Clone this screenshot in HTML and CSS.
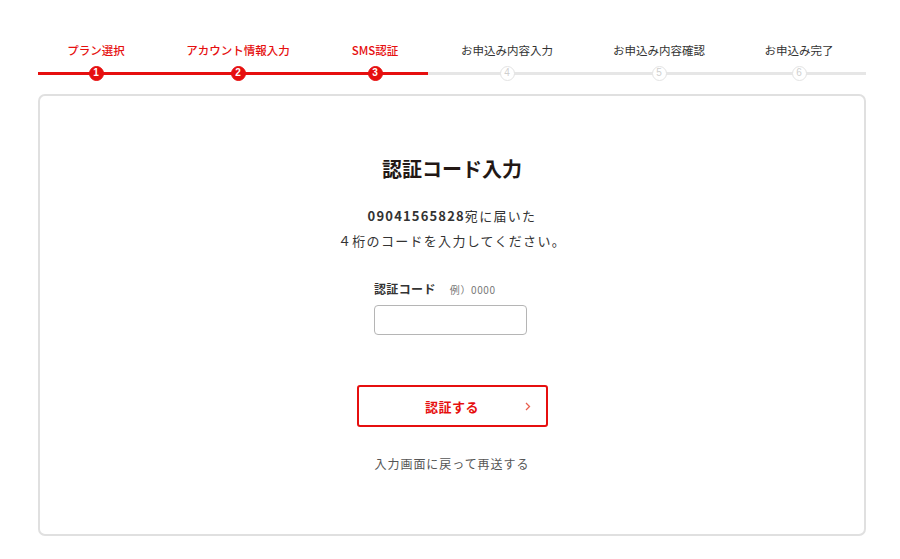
FILE: index.html
```html
<!DOCTYPE html>
<html lang="ja">
<head>
<meta charset="utf-8">
<title>認証コード入力</title>
<link rel="stylesheet" href="styles.css">
</head>
<body>
<div class="page">
  <ol class="steps">
    <li class="step done"><span class="step-label">プラン選択</span><span class="track"><span class="num">1</span></span></li>
    <li class="step done"><span class="step-label">アカウント情報入力</span><span class="track"><span class="num">2</span></span></li>
    <li class="step done"><span class="step-label">SMS認証</span><span class="track"><span class="num">3</span></span></li>
    <li class="step"><span class="step-label">お申込み内容入力</span><span class="track"><span class="num">4</span></span></li>
    <li class="step"><span class="step-label">お申込み内容確認</span><span class="track"><span class="num">5</span></span></li>
    <li class="step"><span class="step-label">お申込み完了</span><span class="track"><span class="num">6</span></span></li>
  </ol>

  <section class="card">
    <h1 class="title">認証コード入力</h1>
    <p class="lead"><b>09041565828</b>宛に届いた<br>４桁のコードを入力してください。</p>
    <div class="field">
      <label class="field-label" for="code">認証コード<span class="hint">例）0000</span></label>
      <input class="field-input" id="code" type="text">
    </div>
    <button class="submit" type="button"><span>認証する</span><svg class="chev" width="6" height="9" viewBox="0 0 6 9"><path d="M1 1l3.5 3.5L1 8" fill="none" stroke="currentColor" stroke-width="1.3"/></svg></button>
    <a class="back" href="#">入力画面に戻って再送する</a>
  </section>
</div>
</body>
</html>
```

FILE: styles.css
```css
* { box-sizing: border-box; }
html, body { margin: 0; padding: 0; background: #fff; }
body {
  font-family: "Noto Sans CJK JP", "Noto Sans", sans-serif;
  color: #222;
}
.page {
  width: 828px;
  margin: 0 0 0 38px;
  padding-top: 42px;
}
.steps {
  list-style: none;
  margin: 0;
  padding: 0;
  display: grid;
  grid-template-columns: 116px 168px 106px 158px 146px 134px;
}
.step {
  display: flex;
  flex-direction: column;
  align-items: center;
}
.step-label {
  font-size: 11.5px;
  line-height: 16px;
  font-weight: 400;
  color: #333;
  white-space: nowrap;
}
.step.done .step-label { color: #e60f0f; font-weight: 500; }
.track {
  margin-top: 8px;
  width: 100%;
  height: 15px;
  display: flex;
  justify-content: center;
  align-items: center;
  background: linear-gradient(#e6e6e6, #e6e6e6) center / 100% 3px no-repeat;
}
.step.done .track {
  background: linear-gradient(#e60f0f, #e60f0f) center / 100% 3px no-repeat;
}
.num {
  width: 15px;
  height: 15px;
  border-radius: 50%;
  border: 1.5px solid #e3e3e3;
  background: #fff;
  color: #cfcfcf;
  font-family: "Liberation Sans", Arial, sans-serif;
  font-size: 10px;
  line-height: 12px;
  text-align: center;
}
.step.done .num {
  background: #e60f0f;
  border-color: #e60f0f;
  color: #fff;
  font-weight: 700;
}
.card {
  margin-top: 13px;
  height: 442px;
  border: 2px solid #e0e0e0;
  border-radius: 7px;
  padding-top: 59px;
  display: flex;
  flex-direction: column;
  align-items: center;
}
.title {
  margin: 0;
  font-size: 20px;
  line-height: 28px;
  font-weight: 700;
  color: #231815;
}
.lead {
  margin: 20px 0 0;
  font-size: 13px;
  line-height: 25px;
  text-align: center;
  color: #333;
  letter-spacing: 0.1em;
}
.lead b { font-weight: 700; letter-spacing: 0.09em; }
.field {
  margin-top: 27px;
  width: 153px;
  display: flex;
  flex-direction: column;
  margin-right: 3px;
}
.field-label {
  font-size: 12px;
  line-height: 18px;
  font-weight: 700;
  color: #333;
  letter-spacing: 0.03em;
}
.hint {
  margin-left: 14px;
  font-size: 10px;
  font-weight: 400;
  color: #777;
  letter-spacing: 0.06em;
}
.field-input {
  margin-top: 6px;
  width: 153px;
  height: 30px;
  border: 1.5px solid #b5b5b5;
  border-radius: 4px;
  background: #fff;
  font-size: 13px;
  padding: 0 8px;
}
.submit {
  margin-top: 50px;
  width: 191px;
  height: 42px;
  border: 2px solid #e60f0f;
  border-radius: 3px;
  background: #fff;
  color: #e60f0f;
  font-family: inherit;
  font-size: 13px;
  font-weight: 700;
  letter-spacing: 0.04em;
  position: relative;
  display: flex;
  align-items: center;
  justify-content: center;
  cursor: pointer;
  padding: 0;
}
.chev {
  position: absolute;
  right: 15px;
  top: 50%;
  margin-top: -4px;
  color: #e8604f;
}
.back {
  margin-top: 28px;
  font-size: 12px;
  line-height: 18px;
  color: #555;
  text-decoration: none;
  letter-spacing: 0.08em;
}
```
